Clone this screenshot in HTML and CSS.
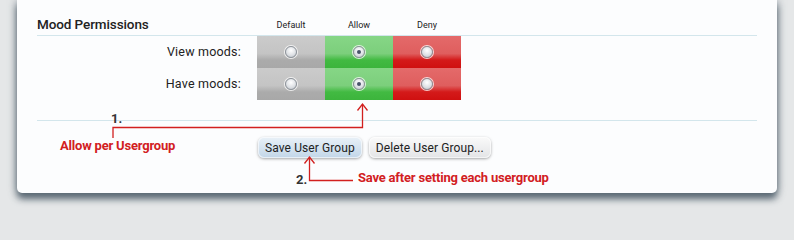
FILE: index.html
```html
<!DOCTYPE html>
<html>
<head>
<meta charset="utf-8">
<link rel="stylesheet" href="styles.css">
</head>
<body>
<div class="page">
  <div class="card">
    <div class="perm">
      <div class="perm-head">
        <h3 class="title">Mood Permissions</h3>
        <span class="col">Default</span>
        <span class="col">Allow</span>
        <span class="col">Deny</span>
      </div>
      <div class="row">
        <span class="lbl">View moods:</span>
        <span class="cell gray"><i class="radio"></i></span>
        <span class="cell green"><i class="radio on"></i></span>
        <span class="cell red"><i class="radio"></i></span>
      </div>
      <div class="row">
        <span class="lbl">Have moods:</span>
        <span class="cell gray"><i class="radio"></i></span>
        <span class="cell green"><i class="radio on"></i></span>
        <span class="cell red"><i class="radio"></i></span>
      </div>
    </div>
    <div class="submit">
      <button class="btn primary">Save User Group</button>
      <button class="btn">Delete User Group...</button>
    </div>

    <svg class="notes" width="760" height="193" viewBox="0 0 760 193">
      <g fill="none" stroke="#d2201f" stroke-width="1.3">
        <path d="M96 138 V127.5 H345.5 V104.5"/>
        <path d="M340.5 110.5 L345.5 104 L350.5 110.5"/>
        <path d="M292.5 157 V180.5 H336"/>
        <path d="M287.5 163.5 L292.5 157 L297.5 163.5"/>
      </g>
    </svg>
    <span class="num n1">1.</span>
    <span class="note t1">Allow per Usergroup</span>
    <span class="num n2">2.</span>
    <span class="note t2">Save after setting each usergroup</span>
  </div>
</div>
</body>
</html>
```

FILE: styles.css
```css
html, body {
  margin: 0;
  padding: 0;
  height: 212px;
  overflow: hidden;
}
body {
  background: #e5e7e8;
  font-family: Roboto, "Open Sans", "DejaVu Sans", sans-serif;
  color: #222;
  width: 794px;
}
.page {
  padding: 0 17px;
  height: 212px;
  box-sizing: border-box;
}
.card {
  position: relative;
  height: 193px;
  box-sizing: border-box;
  padding: 0 20px;
  background: #fcfdfe;
  border-radius: 0 0 5px 5px;
  box-shadow: 0 6px 7px rgba(85, 100, 112, 0.95), 0 0 10px rgba(95, 110, 122, 0.6);
}
.perm-head {
  display: flex;
  align-items: flex-end;
  height: 36px;
  box-sizing: border-box;
  border-bottom: 1px solid #d3e6ec;
}
.title {
  width: 220px;
  margin: 0;
  padding-bottom: 3px;
  font-size: 13.5px;
  font-weight: 500;
  color: #222;
  letter-spacing: -0.1px;
}
.col {
  width: 68px;
  text-align: center;
  font-size: 9px;
  padding-bottom: 5px;
  color: #222;
}
.row {
  display: flex;
  height: 32px;
}
.lbl {
  width: 220px;
  box-sizing: border-box;
  padding-right: 16px;
  text-align: right;
  line-height: 32px;
  font-size: 12.5px;
  color: #222;
  letter-spacing: 0.2px;
}
.cell {
  width: 68px;
  display: flex;
  align-items: center;
  justify-content: center;
}
.gray {
  background: linear-gradient(#cbcbcb 0%, #c4c4c4 55%, #ababab 75%, #a8a8a8 100%);
}
.green {
  background: linear-gradient(#86d686 0%, #7ccf7c 55%, #42ba42 75%, #3cb43c 100%);
}
.red {
  background: linear-gradient(#e46a6a 0%, #df5e5e 55%, #d41a1a 75%, #cf1010 100%);
}
.radio {
  width: 10px;
  height: 10px;
  border-radius: 50%;
  border: 1px solid #8e949b;
  background: radial-gradient(circle at 50% 35%, #ffffff 0%, #dfe2e6 55%, #b9bec5 100%);
  box-shadow: 0 0 0 1px rgba(255, 255, 255, 0.75);
  display: flex;
  align-items: center;
  justify-content: center;
}
.radio.on::after {
  content: "";
  width: 4px;
  height: 4px;
  border-radius: 50%;
  background: #47536a;
}
.submit {
  margin-top: 20px;
  border-top: 1px solid #d3e6ec;
  padding: 16px 0 0 221px;
  display: flex;
  gap: 7px;
}
.btn {
  height: 21px;
  padding: 0 7px;
  border: none;
  border-radius: 6px;
  font-family: Roboto, "Open Sans", sans-serif;
  font-size: 12px;
  color: #222;
  letter-spacing: 0.1px;
  background: linear-gradient(#fafafa, #e3e4e6);
  box-shadow: 0 1px 3px rgba(0, 0, 0, 0.35), inset 0 0 0 1px rgba(255, 255, 255, 0.6);
}
.btn.primary {
  background: linear-gradient(#e9f1f8, #c2d6e8);
}
.notes {
  position: absolute;
  left: 0;
  top: 0;
}
.num {
  position: absolute;
  font-size: 13px;
  font-weight: 700;
  color: #333;
  line-height: 1;
}
.n1 { left: 94px; top: 112px; }
.n2 { left: 279px; top: 173px; }
.note {
  position: absolute;
  font-size: 13px;
  font-weight: 700;
  color: #d2201f;
  line-height: 1;
  letter-spacing: -0.2px;
  white-space: nowrap;
}
.t1 { left: 43px; top: 139px; }
.t2 { left: 341px; top: 171px; }
```
